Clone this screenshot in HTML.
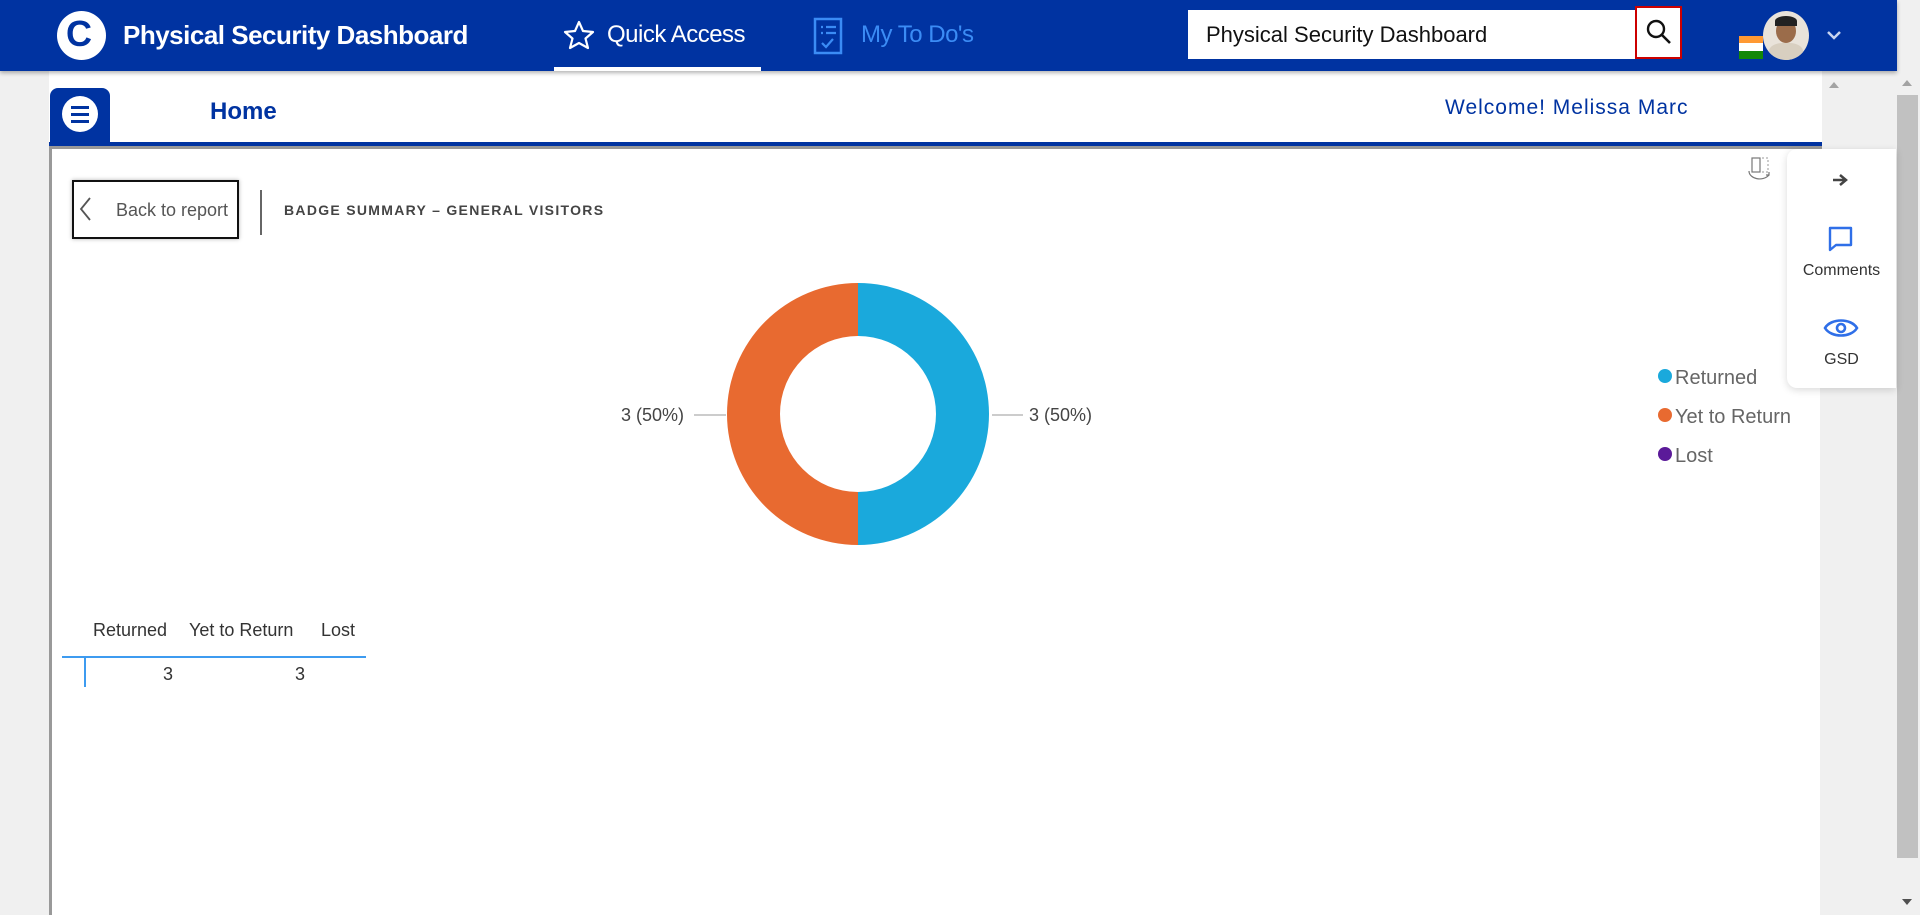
<!DOCTYPE html>
<html><head><meta charset="utf-8">
<style>
*{margin:0;padding:0;box-sizing:border-box}
html,body{width:1920px;height:915px;overflow:hidden;background:#f0f0f0;font-family:"Liberation Sans",sans-serif}
.abs{position:absolute}
</style></head><body>
<!-- header -->
<div class="abs" style="left:0;top:0;width:1897px;height:71px;background:#0033a1;box-shadow:0 2px 4px rgba(0,0,0,.3);z-index:5">
  <div class="abs" style="left:57px;top:11px;width:49px;height:49px;border-radius:50%;background:#fff"></div>
  <div class="abs" style="left:66px;top:13px;font:bold 36px 'Liberation Sans',sans-serif;color:#0033a1">C</div>
  <div class="abs" style="left:123px;top:20px;font:bold 26px 'Liberation Sans',sans-serif;color:#fff;letter-spacing:-0.5px">Physical Security Dashboard</div>
  <svg class="abs" style="left:560px;top:16px" width="38" height="38" viewBox="0 0 38 38"><path d="M19 6 L23 15 L33 16 L25.5 22.5 L28 32 L19 27 L10 32 L12.5 22.5 L5 16 L15 15 Z" fill="none" stroke="#fff" stroke-width="2.2" stroke-linejoin="round"/></svg>
  <div class="abs" style="left:607px;top:21px;font:24px 'Liberation Sans',sans-serif;color:#fff;letter-spacing:-0.5px">Quick Access</div>
  <div class="abs" style="left:554px;top:67px;width:207px;height:4px;background:#fff"></div>
  <svg class="abs" style="left:813px;top:17px" width="32" height="40" viewBox="0 0 32 40"><rect x="2" y="2" width="26" height="34" fill="none" stroke="#3b8cf5" stroke-width="2.5"/><path d="M8 10h2M13 10h10M8 16h2M13 16h10M9 26l4 4 7-8" stroke="#3b8cf5" stroke-width="2.2" fill="none"/></svg>
  <div class="abs" style="left:861px;top:21px;font:24px 'Liberation Sans',sans-serif;color:#3b8cf5;letter-spacing:-0.5px">My To Do's</div>
  <div class="abs" style="left:1188px;top:10px;width:448px;height:49px;background:#fff"></div>
  <div class="abs" style="left:1206px;top:22px;font:22px 'Liberation Sans',sans-serif;color:#111">Physical Security Dashboard</div>
  <div class="abs" style="left:1635px;top:6px;width:47px;height:53px;background:#fff;border:2px solid #c00"></div>
  <svg class="abs" style="left:1645px;top:18px" width="28" height="28" viewBox="0 0 28 28"><circle cx="11" cy="11" r="8" fill="none" stroke="#111" stroke-width="2.4"/><path d="M17 17l8 8" stroke="#111" stroke-width="2.6"/></svg>
  <div class="abs" style="left:1739px;top:36px;width:24px;height:7px;background:#ff9933"></div>
  <div class="abs" style="left:1739px;top:43px;width:24px;height:8px;background:#fff"></div>
  <div class="abs" style="left:1739px;top:51px;width:24px;height:8px;background:#138808"></div>
  <div class="abs" style="left:1763px;top:11px;width:46px;height:49px;border-radius:50%;background:#e9e3da;overflow:hidden">
    <div class="abs" style="left:13px;top:8px;width:20px;height:24px;border-radius:50%;background:#9b6c4a"></div>
    <div class="abs" style="left:12px;top:5px;width:22px;height:10px;border-radius:50% 50% 0 0;background:#222"></div>
    <div class="abs" style="left:6px;top:32px;width:34px;height:20px;border-radius:40% 40% 0 0;background:#d8cfc0"></div>
  </div>
  <svg class="abs" style="left:1826px;top:29px" width="16" height="12" viewBox="0 0 16 12"><path d="M2 3l6 6 6-6" stroke="#c8d4f0" stroke-width="2.5" fill="none"/></svg>
</div>
<!-- right scrollbar -->
<div class="abs" style="left:1896px;top:0;width:24px;height:915px;background:#f0f0f0"></div>
<div class="abs" style="left:1897px;top:95px;width:21px;height:763px;background:#c1c1c1"></div>
<div class="abs" style="left:1902px;top:80px;width:0;height:0;border-left:5px solid transparent;border-right:5px solid transparent;border-bottom:6px solid #a3a3a3"></div>
<div class="abs" style="left:1902px;top:899px;width:0;height:0;border-left:5px solid transparent;border-right:5px solid transparent;border-top:6px solid #505050"></div>
<div class="abs" style="left:1829px;top:82px;width:0;height:0;border-left:5px solid transparent;border-right:5px solid transparent;border-bottom:6px solid #a3a3a3"></div>
<!-- subheader -->
<div class="abs" style="left:49px;top:71px;width:1773px;height:71px;background:#fff"></div>
<div class="abs" style="left:49px;top:142px;width:1773px;height:4px;background:#0033a1"></div>
<div class="abs" style="left:49px;top:146px;width:1773px;height:3px;background:#999"></div>
<div class="abs" style="left:50px;top:88px;width:60px;height:54px;background:#0033a1;border-radius:8px 8px 0 0"></div>
<div class="abs" style="left:62px;top:96px;width:36px;height:36px;border-radius:50%;background:#fff"></div>
<div class="abs" style="left:71px;top:106px;width:18px;height:3px;background:#0033a1"></div>
<div class="abs" style="left:71px;top:113px;width:18px;height:3px;background:#0033a1"></div>
<div class="abs" style="left:71px;top:120px;width:18px;height:3px;background:#0033a1"></div>
<div class="abs" style="left:210px;top:98px;font:bold 24px 'Liberation Sans',sans-serif;color:#0033a1">Home</div>
<div class="abs" style="left:1445px;top:96px;font:21px 'Liberation Sans',sans-serif;color:#0033a1;letter-spacing:1px">Welcome! Melissa Marc</div>
<!-- content -->
<div class="abs" style="left:49px;top:149px;width:1771px;height:766px;background:#fff;border-left:3px solid #999"></div>
<div class="abs" style="left:72px;top:180px;width:167px;height:59px;border:2px solid #111;background:#fff;box-shadow:0 0 4px rgba(0,0,0,.3)"></div>
<svg class="abs" style="left:78px;top:196px" width="16" height="26" viewBox="0 0 16 26"><path d="M12 2L3 13l9 11" stroke="#555" stroke-width="1.8" fill="none"/></svg>
<div class="abs" style="left:116px;top:200px;font:18px 'Liberation Sans',sans-serif;color:#555">Back to report</div>
<div class="abs" style="left:260px;top:190px;width:2px;height:45px;background:#666"></div>
<div class="abs" style="left:284px;top:202px;font:bold 14px 'Liberation Sans',sans-serif;color:#444;letter-spacing:1.3px">BADGE SUMMARY – GENERAL VISITORS</div>
<svg class="abs" style="left:1745px;top:155px" width="30" height="30" viewBox="0 0 30 30"><rect x="7" y="3" width="8" height="14" fill="none" stroke="#777" stroke-width="1.2"/><path d="M17 3h6v14h-6" stroke="#999" stroke-width="1" stroke-dasharray="2 2" fill="none"/><path d="M4 16c0 8 14 11 20 4M21 20h3v-3" stroke="#777" stroke-width="1.2" fill="none"/></svg>
<!-- donut -->
<svg class="abs" style="left:0;top:0" width="1920" height="915">
  <path d="M858 283 A131 131 0 0 1 858 545 L858 492 A78 78 0 0 0 858 336 Z" fill="#1aa9dc"/>
  <path d="M858 283 A131 131 0 0 0 858 545 L858 492 A78 78 0 0 1 858 336 Z" fill="#e86a30"/>
  <line x1="694" y1="415" x2="726" y2="415" stroke="#999" stroke-width="1"/>
  <line x1="992" y1="415" x2="1023" y2="415" stroke="#999" stroke-width="1"/>
  <circle cx="1665" cy="376" r="7" fill="#1aa9dc"/>
  <circle cx="1665" cy="415" r="7" fill="#e86a30"/>
  <circle cx="1665" cy="454" r="7" fill="#5b1a99"/>
</svg>
<div class="abs" style="left:621px;top:405px;font:18px 'Liberation Sans',sans-serif;color:#444">3 (50%)</div>
<div class="abs" style="left:1029px;top:405px;font:18px 'Liberation Sans',sans-serif;color:#444">3 (50%)</div>
<div class="abs" style="left:1675px;top:359px;font:20px 'Liberation Sans',sans-serif;color:#666;line-height:39px">Returned<br>Yet to Return<br>Lost</div>
<!-- table -->
<div class="abs" style="left:93px;top:620px;font:18px 'Liberation Sans',sans-serif;color:#333">Returned</div>
<div class="abs" style="left:189px;top:620px;font:18px 'Liberation Sans',sans-serif;color:#333">Yet to Return</div>
<div class="abs" style="left:321px;top:620px;font:18px 'Liberation Sans',sans-serif;color:#333">Lost</div>
<div class="abs" style="left:62px;top:656px;width:304px;height:2px;background:#3d9bf0"></div>
<div class="abs" style="left:84px;top:658px;width:2px;height:29px;background:#3d9bf0"></div>
<div class="abs" style="left:163px;top:664px;font:18px 'Liberation Sans',sans-serif;color:#333">3</div>
<div class="abs" style="left:295px;top:664px;font:18px 'Liberation Sans',sans-serif;color:#333">3</div>
<!-- side panel -->
<div class="abs" style="left:1787px;top:149px;width:109px;height:239px;background:#fff;border-radius:10px 0 0 10px;box-shadow:0 2px 8px rgba(0,0,0,.15)"></div>
<svg class="abs" style="left:1831px;top:171px" width="20" height="18" viewBox="0 0 20 18"><path d="M2 9h12M9 4l6 5-6 5" stroke="#444" stroke-width="2.5" fill="none"/></svg>
<svg class="abs" style="left:1826px;top:225px" width="30" height="28" viewBox="0 0 30 28"><path d="M4 3h21v17H10l-6 5z" fill="none" stroke="#2f6fe8" stroke-width="2.4" stroke-linejoin="round"/></svg>
<div class="abs" style="left:1787px;top:262px;width:109px;text-align:center;font:16px 'Liberation Sans',sans-serif;color:#333">Comments</div>
<svg class="abs" style="left:1823px;top:315px" width="36" height="26" viewBox="0 0 36 26"><path d="M2 13C8 3 28 3 34 13C28 23 8 23 2 13Z" fill="none" stroke="#2f6fe8" stroke-width="2.6"/><circle cx="18" cy="13" r="4" fill="none" stroke="#2f6fe8" stroke-width="2.6"/></svg>
<div class="abs" style="left:1787px;top:351px;width:109px;text-align:center;font:16px 'Liberation Sans',sans-serif;color:#333">GSD</div>
</body></html>
